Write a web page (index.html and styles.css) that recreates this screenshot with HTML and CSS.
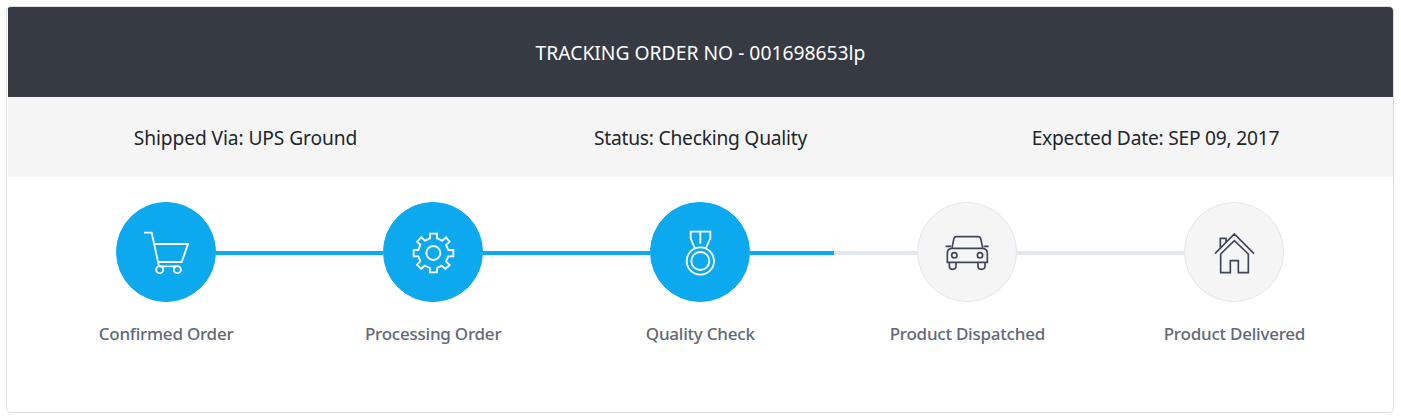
FILE: index.html
```html
<!DOCTYPE html>
<html lang="en">
<head>
<meta charset="utf-8">
<title>Order tracking</title>
<link rel="stylesheet" href="styles.css">
</head>
<body>
<main class="card">
  <header class="title">TRACKING ORDER NO - 001698653lp</header>
  <section class="info">
    <div class="info-item">Shipped Via: UPS Ground</div>
    <div class="info-item status">Status: Checking Quality</div>
    <div class="info-item date">Expected Date: SEP 09, 2017</div>
  </section>
  <section class="steps">
    <div class="step done">
      <div class="track"><div class="circle"><svg class="icon" viewBox="30 30 300 300">
        <path d="M114 122H137L159 223H212M147 156H246L227 210H157"/><circle cx="161" cy="233" r="10.5"/><circle cx="214" cy="233" r="10.5"/>
      </svg></div></div>
      <div class="label">Confirmed Order</div>
    </div>
    <div class="step done">
      <div class="track"><div class="circle"><svg class="icon" viewBox="30 30 300 300">
        <path d="M171 125H192V139L208 146L219 136L230 149L219 159L226 174H241V193H226L219 208L230 219L217 231L206 221L192 228V241H171V228L155 221L145 231L132 218L142 207L136 193H122V174H136L142 158L132 149L145 136L156 146L171 139Z"/><circle cx="181" cy="183" r="21"/>
      </svg></div></div>
      <div class="label">Processing Order</div>
    </div>
    <div class="step done">
      <div class="track"><div class="circle"><svg class="icon" viewBox="30 30 300 300">
        <path d="M164 168L152 139V119H211V139L198 168M181 119V155"/><circle cx="181" cy="207" r="41"/><circle cx="181" cy="207" r="27"/>
      </svg></div></div>
      <div class="label">Quality Check</div>
    </div>
    <div class="step">
      <div class="track"><div class="circle"><svg class="icon" viewBox="30 30 300 300">
        <path d="M135 167L141 139Q143 134 149 134H213Q219 134 221 139L227 167M116 163H132M230 163H245M133 169H228Q241 171 241 184V211H121V184Q121 171 133 169ZM127 212V224Q128 232 137 232Q147 232 147 223V212M213 212V223Q213 232 223 232Q234 232 234 223V212"/><circle cx="142" cy="190" r="8"/><circle cx="219" cy="190" r="8"/>
      </svg></div></div>
      <div class="label">Product Dispatched</div>
    </div>
    <div class="step">
      <div class="track"><div class="circle"><svg class="icon" viewBox="30 30 300 300">
        <path d="M123 185L181 126L240 185M139 168V139H156V151M140 242V186L181 146L223 186V242H193V206H169V242Z"/>
      </svg></div></div>
      <div class="label">Product Delivered</div>
    </div>
  </section>
</main>
</body>
</html>
```
FILE: styles.css
```css
* { box-sizing: border-box; }
body {
  margin: 0;
  padding: 6px 7px 5px 6px;
  height: 418px;
  background: #fff;
  font-family: "Noto Sans", "Open Sans", sans-serif;
  color: #212529;
}
.card {
  height: 407px;
  padding-left: 1px;
  border: 1px solid #dcdcdc;
  border-radius: 5px;
  overflow: hidden;
}
.title {
  height: 90px;
  display: flex;
  align-items: center;
  justify-content: center;
  background: #363a43;
  color: #fff;
  font-size: 19.3px;
  white-space: nowrap;
}
.info {
  height: 80px;
  padding: 0 10px;
  display: flex;
  align-items: center;
  background: #f5f5f5;
  font-size: 19.2px;
  letter-spacing: -0.1px;
  white-space: nowrap;
}
.info-item { flex: 1; text-align: center; }
.info .status { letter-spacing: -0.22px; }
.info .date { letter-spacing: -0.22px; }
.steps {
  display: flex;
  padding: 25px 25px 0 24.5px;
}
.step { flex: 1; text-align: center; }
.track {
  display: flex;
  align-items: center;
}
.track::before,
.track::after {
  content: "";
  flex: 1;
  height: 4px;
  margin-top: 2px;
  background: #e1e7ec;
}
.step:first-child .track::before,
.step:last-child .track::after { background: transparent; }
.done .track::before,
.done .track::after { background: #0da9ef; }
.circle {
  width: 100px;
  height: 100px;
  border: 1px solid #e1e7ec;
  border-radius: 50%;
  background: #f5f5f5;
  color: #3f4657;
}
.done .circle {
  border-color: #0da9ef;
  background: #0da9ef;
  color: #fff;
}
.icon {
  display: block;
  width: 100px;
  height: 100px;
  margin: -1px;
  fill: none;
  stroke: currentColor;
  stroke-width: 5;
}
.done .icon { stroke-width: 5.5; }
.label {
  margin-top: 19px;
  color: #606975;
  font-size: 17px;
  font-weight: 500;
  letter-spacing: -0.23px;
  line-height: 26px;
  white-space: nowrap;
}
```
